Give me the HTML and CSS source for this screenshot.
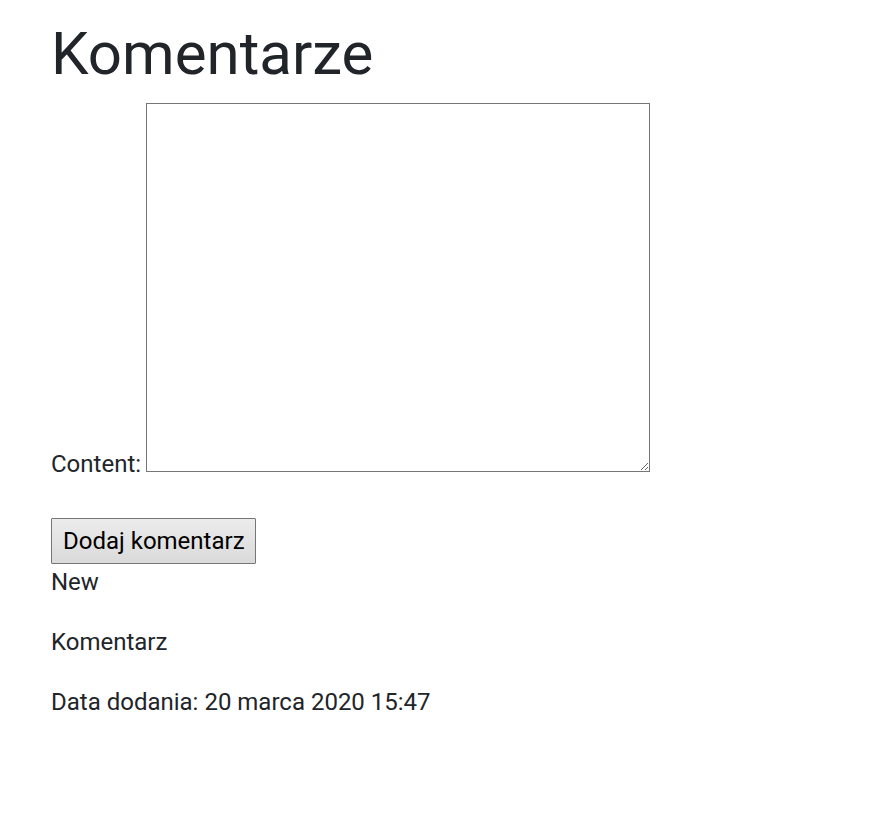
FILE: index.html
```html
<!DOCTYPE html>
<html lang="pl">
<head>
<meta charset="utf-8">
<title>Komentarze</title>
<link rel="stylesheet" href="styles.css">
</head>
<body>
<main class="page">
  <h1 class="title">Komentarze</h1>
  <form class="comment-form">
    <div class="field">
      <label class="field-label" for="content">Content:</label><textarea class="field-input" id="content"></textarea>
    </div>
    <div class="actions">
      <button class="btn" type="button">Dodaj komentarz</button>
    </div>
  </form>
  <div class="comment">
    <p class="comment-line">New</p>
    <p class="comment-line">Komentarz</p>
    <p class="comment-line">Data dodania: 20 marca 2020 15:47</p>
  </div>
</main>
</body>
</html>
```

FILE: styles.css
```css
html, body {
  margin: 0;
  padding: 0;
  background: #fff;
}
body {
  font-family: Roboto, "Liberation Sans", sans-serif;
  font-size: 24px;
  line-height: 36px;
  color: #212529;
}
.page {
  padding: 18px 51px 0 51px;
}
.title {
  font-size: 60px;
  font-weight: 400;
  line-height: 72px;
  margin: 0 0 13px 0;
}
.comment-form {
  margin: 0;
}
.field {
  line-height: 36px;
}
.field-label {
  font-size: 24px;
}
.field-input {
  box-sizing: border-box;
  width: 504px;
  height: 369px;
  margin: 0 0 0 5px;
  border: 1px solid #767676;
  border-radius: 0;
  padding: 2px;
  font-family: Roboto, sans-serif;
  font-size: 24px;
  vertical-align: baseline;
  resize: both;
}
.actions {
  margin-top: 36px;
}
.btn {
  box-sizing: border-box;
  font-family: Roboto, sans-serif;
  font-size: 24px;
  color: #000;
  width: 205px;
  height: 46px;
  padding: 0 10px 0 11px;
  border: 1px solid #767676;
  border-radius: 1px;
  background: linear-gradient(#ececec, #dadada);
  line-height: 44px;
  text-align: left;
  white-space: nowrap;
  display: block;
}
.comment {
  margin-top: 0;
}
.comment-line {
  margin: 0 0 24px 0;
}
```
